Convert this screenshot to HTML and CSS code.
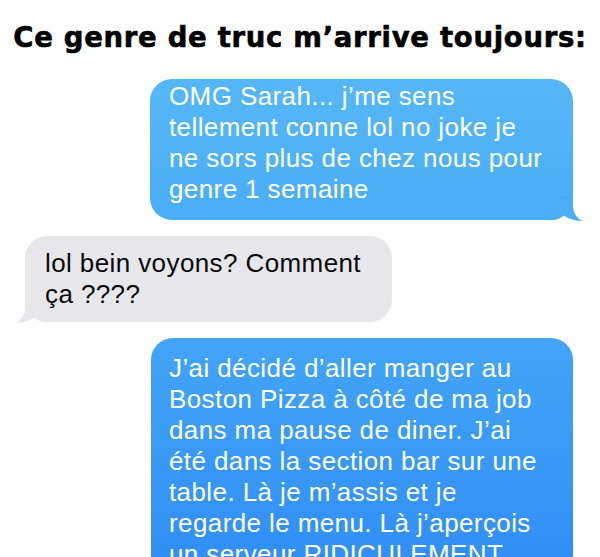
FILE: index.html
```html
<!DOCTYPE html>
<html lang="fr">
<head>
<meta charset="utf-8">
<title>Ce genre de truc m’arrive toujours</title>
<link rel="stylesheet" href="styles.css">
</head>
<body>
<h1 class="caption">Ce genre de truc m’arrive toujours:</h1>
<div class="thread">
  <div class="msg sent light">
    <p class="text">OMG Sarah... j’me sens<br>tellement conne lol no joke je<br>ne sors plus de chez nous pour<br>genre 1 semaine</p>
    <svg class="tail tail-right" viewBox="0 0 29 25" width="29" height="25" aria-hidden="true"><path d="M0 0 H20 V10 C20 17 24 22 29 25 C23 25 16 23 10 19 C7 22 4 24 0 24 Z" fill="#4aaef6"/></svg>
  </div>
  <div class="msg received">
    <p class="text">lol bein voyons? Comment<br>ça ????</p>
    <svg class="tail tail-left" viewBox="0 0 29 25" width="29" height="25" aria-hidden="true"><path d="M0 0 H20 V10 C20 17 24 22 29 25 C23 25 16 23 10 19 C7 22 4 24 0 24 Z" fill="#e6e6eb"/></svg>
  </div>
  <div class="msg sent dark">
    <p class="text">J’ai décidé d’aller manger au<br>Boston Pizza à côté de ma job<br>dans ma pause de diner. J’ai<br>été dans la section bar sur une<br>table. Là je m’assis et je<br>regarde le menu. Là j’aperçois<br>un serveur RIDICULEMENT</p>
  </div>
</div>
</body>
</html>
```

FILE: styles.css
```css
html, body {
  margin: 0;
  padding: 0;
  background: #ffffff;
}

body {
  width: 600px;
  height: 557px;
  overflow: hidden;
}

.caption {
  margin: 0;
  padding: 21px 0 0 0;
  font-family: "DejaVu Sans", "Liberation Sans", sans-serif;
  font-weight: 700;
  font-size: 27.5px;
  line-height: 32px;
  letter-spacing: 0.7px;
  -webkit-text-stroke: 0.6px #000;
  color: #000;
  text-align: center;
}

.thread {
  display: flex;
  flex-direction: column;
  gap: 16px;
  padding: 26px 27px 0 25px;
}

.msg {
  position: relative;
  border-radius: 22px;
  box-sizing: border-box;
}

.text {
  margin: 0;
  font-family: "Liberation Sans", Arial, sans-serif;
  font-size: 26px;
  line-height: 31px;
  letter-spacing: 0.4px;
}

.sent {
  align-self: flex-end;
  color: #ffffff;
}

.sent.light {
  width: 423px;
  padding: 2px 16px 15px 19px;
  background: linear-gradient(#55b7f7, #4aaef6);
}

.sent.dark {
  width: 422px;
  padding: 15px 16px 40px 18px;
  background: linear-gradient(#42a5f6, #2f8df4 240px);
}

.received {
  align-self: flex-start;
  width: 367px;
  padding: 12px 18px 12px 20px;
  background: #e6e6eb;
  color: #0a0a0a;
}

.tail {
  position: absolute;
  bottom: -1px;
  display: block;
}

.tail-right {
  right: -9px;
}

.tail-left {
  left: -9px;
  transform: scaleX(-1);
}
```
